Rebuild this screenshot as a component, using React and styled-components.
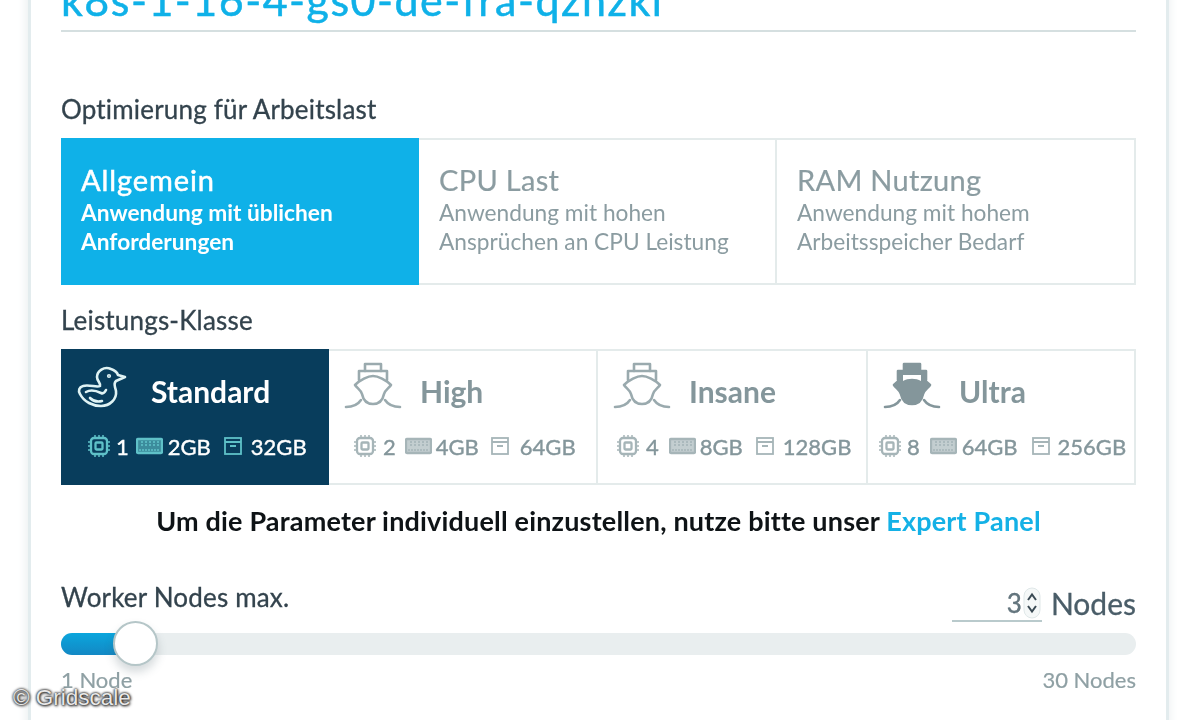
import React from "react";
import styled, { createGlobalStyle } from "styled-components";

const Global = createGlobalStyle`
  html, body { margin: 0; padding: 0; background: #fff; height: 720px; overflow: hidden; }
  body { font-family: Lato, "Open Sans", sans-serif; }
`;
const Page = styled.div`
  position: relative;
  width: 1200px;
  height: 720px;
  overflow: hidden;
  background: #fff;
`;
const Card = styled.main`
  box-sizing: border-box;
  width: 1141px;
  height: 760px;
  margin-left: 28px;
  padding: 0 30px;
  border-left: 3px solid #e3ecee;
  border-right: 3px solid #e3ecee;
  box-shadow: -6px 0 8px -3px #eef1f2, 5px 0 8px -3px #f0f3f4;
  filter: blur(0.5px);
`;
const Title = styled.h1`
  margin: -23px 0 0;
  height: 53px;
  font-size: 43px;
  line-height: 46px;
  font-weight: 400;
  letter-spacing: 1.5px;
  -webkit-text-stroke: 0.5px #0fb1e8;
  color: #0fb1e8;
  border-bottom: 2px solid #d5dfe0;
  white-space: nowrap;
`;
const Label = styled.div`
  font-size: 26px;
  line-height: 30px;
  letter-spacing: 0.18px;
  color: #33434d;
  -webkit-text-stroke: 0.3px #33434d;
  margin-top: ${(p) => p.$top}px;
  margin-bottom: ${(p) => p.$bottom}px;
`;
const Row = styled.div`
  display: grid;
  grid-template-columns: ${(p) => p.$cols};
  height: ${(p) => p.$h}px;
`;
const Tile = styled.div`
  box-sizing: border-box;
  padding: 23px 10px 0 ${(p) => (p.$first ? 18 : 20)}px;
  background: ${(p) => (p.$on ? "#0fb1e8" : "#fff")};
  border: 2px solid ${(p) => (p.$on ? "#0fb1e8" : "#e4ebeb")};
  border-left-width: ${(p) => (p.$first ? 2 : 0)}px;
  color: ${(p) => (p.$on ? "#fff" : "#8b9ca1")};
`;
const TileName = styled.div`
  font-size: 29px;
  line-height: 34px;
  letter-spacing: ${(p) => (p.$on ? 0.9 : 0.3)}px;
  -webkit-text-stroke: ${(p) => (p.$on ? 0.5 : 0.2)}px currentColor;
`;
const TileText = styled.div`
  margin-top: 1px;
  font-size: 22.7px;
  line-height: 29px;
  font-weight: ${(p) => (p.$on ? 700 : 400)};
`;
const Klass = styled.div`
  box-sizing: border-box;
  display: flex;
  flex-direction: column;
  background: ${(p) => (p.$on ? "#083d5c" : "#fff")};
  border: 2px solid ${(p) => (p.$on ? "#083d5c" : "#e4ebeb")};
  border-left-width: ${(p) => (p.$first ? 2 : 0)}px;
  color: ${(p) => (p.$on ? "#fff" : "#84969b")};
`;
const KlassHead = styled.div`
  display: flex;
  align-items: center;
  height: 80px;
  padding-left: ${(p) => p.$pad}px;
  gap: ${(p) => p.$gap}px;
  font-size: 30px;
  font-weight: 700;
`;
const HeadIcon = styled.svg`
  width: ${(p) => p.$w || 58}px;
  height: ${(p) => p.$h || 52}px;
  margin-top: -8px;
  flex: none;
  fill: none;
  stroke: ${(p) => (p.$on ? "#dff3f4" : p.$solid ? "#84969b" : "#9aaaae")};
  stroke-width: 2.6;
  stroke-linecap: round;
  stroke-linejoin: round;
`;
const Specs = styled.div`
  display: flex;
  align-items: center;
  height: 30px;
  padding-left: ${(p) => p.$pad}px;
  font-size: 22px;
  font-weight: 400;
  -webkit-text-stroke: 0.4px currentColor;
`;
const Spec = styled.span`
  display: inline-flex;
  align-items: center;
  gap: ${(p) => p.$gap}px;
  margin-right: ${(p) => p.$after || 0}px;
`;
const SmallIcon = styled.svg`
  width: ${(p) => p.$w}px;
  height: 24px;
  flex: none;
  fill: none;
  stroke: ${(p) => (p.$on ? "#5fc1c8" : "#a6b5b8")};
  stroke-width: 2.3;
`;
const Note = styled.p`
  margin: 21px 0 0;
  height: 30px;
  text-align: center;
  font-size: 27px;
  line-height: 30px;
  font-weight: 700;
  color: #0e1316;
  letter-spacing: 0.18px;
  white-space: nowrap;
`;
const Link = styled.a`
  color: #14b1e6;
`;
const SliderHead = styled.div`
  display: flex;
  justify-content: space-between;
  align-items: flex-end;
  margin-top: 46px;
  height: 40px;
`;
const WorkerLabel = styled.div`
  font-size: 26px;
  line-height: 30px;
  letter-spacing: 0.18px;
  color: #33434d;
  -webkit-text-stroke: 0.3px #33434d;
  align-self: flex-start;
`;
const NodeCount = styled.div`
  display: flex;
  align-items: flex-end;
  gap: 9px;
  font-size: 30px;
  line-height: 38px;
  color: #4a5d68;
  -webkit-text-stroke: 0.3px #4a5d68;
`;
const NumberBox = styled.div`
  box-sizing: border-box;
  display: flex;
  justify-content: flex-end;
  align-items: center;
  gap: 1px;
  width: 90px;
  height: 36px;
  padding-right: 1px;
  border-bottom: 2px solid #b9cacc;
  font-size: 26px;
  color: #65777f;
`;
const Spinner = styled.svg`
  width: 18px;
  height: 32px;
  flex: none;
`;
const Track = styled.div`
  position: relative;
  margin-top: 11px;
  height: 22px;
  border-radius: 11px;
  background: #e9eeef;
`;
const Fill = styled.div`
  height: 100%;
  border-radius: 11px 0 0 11px;
  background: linear-gradient(#0ba6dd, #1388c4);
`;
const Thumb = styled.div`
  position: absolute;
  left: 52px;
  top: -12px;
  box-sizing: border-box;
  width: 45px;
  height: 45px;
  border-radius: 50%;
  background: #fff;
  border: 2px solid #b5c6c8;
  box-shadow: 0 6px 10px rgba(60, 80, 90, 0.22);
`;
const Ends = styled.div`
  display: flex;
  justify-content: space-between;
  margin-top: 12px;
  font-size: 22px;
  line-height: 26px;
  color: #8fa0a4;
  -webkit-text-stroke: 0.2px #8fa0a4;
`;
const Watermark = styled.div`
  position: absolute;
  left: 13px;
  top: 685px;
  font-family: "Liberation Sans", Arial, sans-serif;
  font-size: 22.5px;
  line-height: 26px;
  color: #e8e8e8;
  text-shadow: 0 0 2px #222, 0 0 3px #222, 1px 1px 3px #333;
`;

const Duck = () => (
  <HeadIcon $on $w={50} $h={44} viewBox="0 0 50 42">
    <path d="M34 3C27 0 20 5 20 11c0 4 4 6 3 9-3 2-11-2-17 0-4 1-5 5-3 8 4 8 13 12 21 12 9 0 16-7 15-15-1-5-3-7 0-10l9-4-7-2c-1-3-4-5-7-6z" />
    <path d="M9 26c5-3 11-1 15 1 2 1 4-1 5-3" />
    <path d="M13 32c3 3 8 4 12 3" />
    <circle cx="32" cy="10" r="0.8" />
  </HeadIcon>
);
const Ship = ({ solid }) => {
  const f = solid ? "#84969b" : "none";
  return (
    <HeadIcon $solid={solid} viewBox="0 0 58 52">
      <path d="M21 10V3h16v7" fill={f} />
      <path d="M15 19v-9h28v9" fill={f} />
      <path d="M29 15c-5 0-13 4-18 9 2 3 6 5 7 9 1 5 4 10 11 10s10-5 11-10c1-4 5-6 7-9-5-5-13-9-18-9z" fill={f} />
      {solid && <path d="M20 20c5-3 13-3 18 0v-6H20z" fill="#fff" stroke="none" />}
      <path d="M2 46c6 0 11-1 15-7M56 46c-6 0-11-1-15-7" />
    </HeadIcon>
  );
};
const Chip = ({ on }) => (
  <SmallIcon $on={on} $w={24} viewBox="0 0 24 24">
    <rect x="4" y="4" width="16" height="16" rx="3" />
    <rect x="8.500" y="8.500" width="7" height="7" rx="1" />
    <path d="M8 1v3M12 1v3M16 1v3M8 20v3M12 20v3M16 20v3M1 8h3M1 12h3M1 16h3M20 8h3M20 12h3M20 16h3" strokeWidth="1.5" />
  </SmallIcon>
);
const Ram = ({ on }) => (
  <SmallIcon $on={on} $w={27} viewBox="0 0 27 24" strokeWidth="1.4">
    <rect x="1" y="5" width="25" height="14" rx="1" fill={on ? "#3c8c9c" : "#c3ced0"} />
    <path d="M6 7v6M10 7v6M14 7v6M18 7v6M22 7v6M3 16h21" strokeWidth="1.6" strokeDasharray="2 1" />
  </SmallIcon>
);
const Box = ({ on }) => (
  <SmallIcon $on={on} $w={20} viewBox="0 0 20 24">
    <rect x="2" y="4" width="16" height="16" strokeWidth="1.8" />
    <path d="M2 8h16M7 12h6" strokeWidth="1.8" />
  </SmallIcon>
);

const workloads = [
  { name: "Allgemein", lines: ["Anwendung mit üblichen", "Anforderungen"], on: true },
  { name: "CPU Last", lines: ["Anwendung mit hohen", "Ansprüchen an CPU Leistung"] },
  { name: "RAM Nutzung", lines: ["Anwendung mit hohem", "Arbeitsspeicher Bedarf"] },
];
const classes = [
  { name: "Standard", icon: "duck", cpu: 1, ram: "2GB", disk: "32GB", on: true, pad: 14, gap: 24, sp: 24, g1: 5, a: 7, g2: 5, b: 12, c: 8 },
  { name: "High", icon: "ship", cpu: 2, ram: "4GB", disk: "64GB", pad: 15, gap: 18, sp: 24, g1: 6, a: 9, g2: 4, b: 11, c: 10 },
  { name: "Insane", icon: "ship", cpu: 4, ram: "8GB", disk: "128GB", pad: 15, gap: 18, sp: 18, g1: 6, a: 10, g2: 4, b: 12, c: 8 },
  { name: "Ultra", icon: "solid", cpu: 8, ram: "64GB", disk: "256GB", pad: 15, gap: 18, sp: 10, g1: 5, a: 10, g2: 5, b: 13, c: 7 },
];

export default function App() {
  return (
    <Page>
      <Global />
      <Card>
        <Title>k8s-1-16-4-gs0-de-fra-qzhzkl</Title>
        <Label $top={62} $bottom={14}>Optimierung für Arbeitslast</Label>
        <Row $cols="358px 358px 359px" $h={147}>
          {workloads.map((w, i) => (
            <Tile key={w.name} $on={w.on} $first={i === 0}>
              <TileName $on={w.on}>{w.name}</TileName>
              <TileText $on={w.on}>
                {w.lines[0]}
                <br />
                {w.lines[1]}
              </TileText>
            </Tile>
          ))}
        </Row>
        <Label $top={20} $bottom={14}>Leistungs-Klasse</Label>
        <Row $cols="268px 269px 270px 268px" $h={136}>
          {classes.map((c, i) => (
            <Klass key={c.name} $on={c.on} $first={i === 0}>
              <KlassHead $pad={c.pad} $gap={c.gap}>
                {c.icon === "duck" ? <Duck /> : <Ship solid={c.icon === "solid"} />}
                {c.name}
              </KlassHead>
              <Specs $pad={c.sp}>
                <Spec $gap={c.g1} $after={c.a}><Chip on={c.on} />{c.cpu}</Spec>
                <Spec $gap={c.g2} $after={c.b}><Ram on={c.on} />{c.ram}</Spec>
                <Spec $gap={c.c}><Box on={c.on} />{c.disk}</Spec>
              </Specs>
            </Klass>
          ))}
        </Row>
        <Note>
          Um die Parameter individuell einzustellen, nutze bitte unser <Link>Expert Panel</Link>
        </Note>
        <SliderHead>
          <WorkerLabel>Worker Nodes max.</WorkerLabel>
          <NodeCount>
            <NumberBox>
              3
              <Spinner viewBox="0 0 18 32">
                <rect x="1" y="1" width="16" height="30" rx="8" fill="#f5f8f8" stroke="#dfe7e8" />
                <path d="M5 13 9 7.500l4 5.500M5 19l4 5.500 4-5.500" fill="none" stroke="#3a4a54" strokeWidth="2" />
              </Spinner>
            </NumberBox>
            Nodes
          </NodeCount>
        </SliderHead>
        <Track>
          <Fill style={{ width: `${(60 / 1075) * 100}%` }} />
          <Thumb />
        </Track>
        <Ends>
          <span>1 Node</span>
          <span>30 Nodes</span>
        </Ends>
      </Card>
      <Watermark>© Gridscale</Watermark>
    </Page>
  );
}
